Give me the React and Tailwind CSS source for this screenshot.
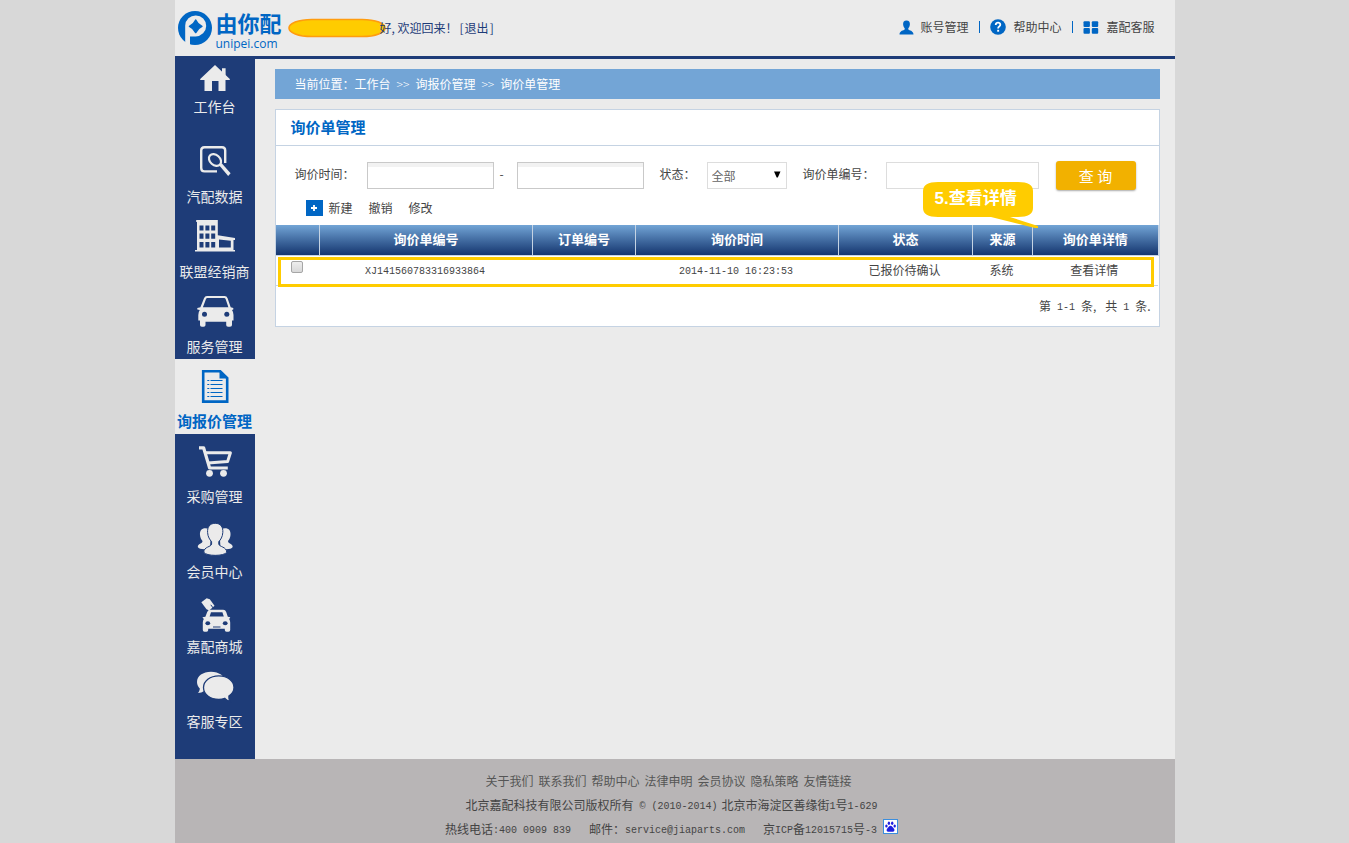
import React from "react";

const INK = "#ebebeb";
const NAVY = "#1e3c78";
const BLUE = "#0066c4";

const HomeIcon = () => (
  <svg viewBox="0 0 80 37" className="h-[37px] w-20" fill={INK} aria-hidden="true">
    <path d="M40 6 L54.8 20 V21 H50.5 V32 H43.5 V22 H37 V32 H29.5 V21 H25.2 V20Z" />
    <path d="M47 9.3 H50.6 V17 L47 13.5Z" />
  </svg>
);

const IconFrame = ({ children }) => (
  <svg viewBox="0 0 80 52" className="h-[52px] w-20" fill={INK} aria-hidden="true">
    {children}
  </svg>
);

const DataIcon = () => (
  <IconFrame>
    <path
      d="M50.2 29 V16.5 Q50.2 13.2 47 13.2 H29.5 Q26.2 13.2 26.2 16.5 V34 Q26.2 37.4 29.5 37.4 H42"
      fill="none"
      stroke={INK}
      strokeWidth="2.4"
    />
    <ellipse cx="40" cy="26" rx="6.8" ry="5" transform="rotate(42 40 26)" fill="none" stroke={INK} strokeWidth="2.2" />
    <path d="M44.3 31.5 L46.7 29.2 L55.6 39.3 L53.2 42Z" />
  </IconFrame>
);

const DealerIcon = () => (
  <IconFrame>
    <path
      fillRule="evenodd"
      d="M21.2 11 H42.8 V26.2 L60 29 V31 H58.5 V41 H60 V42.5 H20 V41 H22 V13 H21.2Z
         M24.5 16.5h4v5h-4z M30.4 16.5h4v5h-4z M36.2 16.5h4v5h-4z
         M24.5 24.5h4v5.2h-4z M30.4 24.5h4v5.2h-4z M36.2 24.5h4v5.2h-4z
         M24.5 32.9h4v5.6h-4z M30.4 32.9h4v5.6h-4z M36.2 32.9h4v5.6h-4z
         M44 30.4 L55.8 31.8 V38.6 H44Z"
    />
  </IconFrame>
);

const CarIcon = () => (
  <IconFrame>
    <path
      fillRule="evenodd"
      d="M32 12 H49.5 Q51.8 12 52.6 14.2 L55.7 23.3 L58.3 24 V25.5 L57 26 Q58.5 28 58.5 31 V36.5 H57 V41 Q57 42.8 55 42.8 H53 Q51.2 42.8 51.2 41 V37.8 H30.5 V41 Q30.5 42.8 28.7 42.8 H26.8 Q25 42.8 25 41 V36.5 H23.3 V31 Q23.3 28 24.8 26 L22.3 25.5 V24 L25.4 23.3 L29 14.2 Q29.8 12 32 12Z
         M32.4 14 Q31.4 14 31 15 L27.9 23.3 H53.4 L50.6 15 Q50.2 14 49.2 14Z"
    />
    <circle cx="29.5" cy="30.3" r="2.5" fill={NAVY} />
    <circle cx="51.8" cy="30.3" r="2.5" fill={NAVY} />
  </IconFrame>
);

const QuoteIcon = () => (
  <IconFrame>
    <path d="M28.2 12.2 H45.2 L52.2 19 V42.6 H28.2Z" fill="none" stroke={BLUE} strokeWidth="2.6" />
    <path d="M44.5 11.5 L53 19.6 H44.5Z" fill={BLUE} />
    <path d="M32.3 21.5h2m1.2 0h12M32.3 25.5h2m1.2 0h12M32.3 29.5h2m1.2 0h12M32.3 33.5h2m1.2 0h12M32.3 37.5h2m1.2 0h12" stroke={BLUE} strokeWidth="1.2" />
  </IconFrame>
);

const CartIcon = () => (
  <IconFrame>
    <path d="M24 13.8 H28.6 L34.6 34 H52.8" fill="none" stroke={INK} strokeWidth="3.2" strokeLinejoin="round" />
    <path d="M30 18.8 H55.4 L52.6 27.6 L33 29" fill="none" stroke={INK} strokeWidth="3" strokeLinejoin="round" />
    <circle cx="34.5" cy="39.3" r="3.4" />
    <circle cx="48.5" cy="39.3" r="3.4" />
  </IconFrame>
);

const MembersIcon = () => (
  <IconFrame>
    <path d="M30.5 19.3 C26.5 19.3 24.6 22 25 26 C25.2 29 26.6 31 27.5 32 C27.5 35 22.8 34.5 22.8 38 C24 40.5 30 40.8 35 39.5 L36 22 C35 20.3 33 19.3 30.5 19.3Z" />
    <path d="M50 19.3 C54 19.3 55.9 22 55.5 26 C55.3 29 53.9 31 53 32 C53 35 57.7 34.5 57.7 38 C56.5 40.5 50.5 40.8 45.5 39.5 L44.5 22 C45.5 20.3 47.5 19.3 50 19.3Z" />
    <path
      d="M40.2 14.3 C34.6 14.3 32.2 18.3 32.6 23.5 C32.8 27.8 34.8 30.8 36.6 32.6 V35 C36.4 38 28.8 37.6 28.8 43.2 C31 47.4 49.5 47.4 51.7 43.2 C51.7 37.6 44 38 43.8 35 V32.6 C45.6 30.8 47.6 27.8 47.8 23.5 C48.2 18.3 45.8 14.3 40.2 14.3Z"
      stroke={NAVY}
      strokeWidth="1"
    />
  </IconFrame>
);

const MallIcon = () => (
  <IconFrame>
    <path d="M26.3 18.3 L31.7 14.3 L34.8 15.3 L39.5 21.8 L34.2 26.6 L31.5 25.3Z" />
    <path d="M35.8 20.8 L39.3 25.5" stroke={NAVY} strokeWidth="1" />
    <path
      fillRule="evenodd"
      d="M35.3 25.8 H48.2 Q50.4 25.8 51.2 28 L52.8 32.8 L55.3 33.3 L54.2 35 Q55.2 36.5 55.2 38.5 V46 Q55.2 47.7 53.5 47.7 H51.5 Q49.8 47.7 49.8 46 V44.8 H33.2 V46 Q33.2 47.7 31.5 47.7 H29.5 Q27.8 47.7 27.8 46 V38.5 Q27.8 36.5 28.8 35 L27.4 33.3 L30.4 32.8 L32.2 28 Q33.1 25.8 35.3 25.8Z
         M36 28.3 L34.6 32.4 H48.8 L47.4 28.3Z"
    />
    <ellipse cx="32.8" cy="39.2" rx="2.4" ry="2" fill={NAVY} />
    <ellipse cx="50.2" cy="39.2" rx="2.4" ry="2" fill={NAVY} />
    <path d="M38 43 h7.5" stroke={NAVY} strokeWidth="1" />
  </IconFrame>
);

const ServiceIcon = () => (
  <IconFrame>
    <path d="M36 12.8 C28 12.8 22 17 22 23 C22 26 23.3 28 24.8 29.5 C24.8 31.3 24 33 22.8 34 C25.5 34 27.5 33.3 29 32 C31 33 33 33.5 36 33.5 C44 33.5 50 29 50 23 C50 17 44 12.8 36 12.8Z" />
    <path
      d="M43.8 16.8 C35 16.8 28.5 22 28.5 28.5 C28.5 35.3 35 40.3 43.8 40.3 C46 40.3 48 40 49.8 39.3 C51 40.8 53 42 55 42.3 C54 40.8 53.7 38.8 53.9 37 C57 35 59 32 59 28.5 C59 22 52.5 16.8 43.8 16.8Z"
      stroke={NAVY}
      strokeWidth="1.3"
    />
  </IconFrame>
);

const NAV = [
  { label: "工作台", Icon: HomeIcon },
  { label: "汽配数据", Icon: DataIcon },
  { label: "联盟经销商", Icon: DealerIcon },
  { label: "服务管理", Icon: CarIcon },
  { label: "询报价管理", Icon: QuoteIcon, active: true },
  { label: "采购管理", Icon: CartIcon },
  { label: "会员中心", Icon: MembersIcon },
  { label: "嘉配商城", Icon: MallIcon },
  { label: "客服专区", Icon: ServiceIcon },
];

const Logo = () => (
  <a href="#" className="flex items-start gap-1 text-[#0066c4]">
    <svg viewBox="0 0 34 34" className="mt-[11px] size-[34px]" aria-hidden="true">
      <circle cx="17" cy="17" r="17" fill={BLUE} />
      <path d="M7.2 34 V14.6 A10.5 10.5 0 1 1 17.7 25.4 H12 V34Z" fill={INK} />
      <path d="M17.7 9 Q19.6 13.4 24 15.3 Q19.6 17.2 17.7 21.6 Q15.8 17.2 11.4 15.3 Q15.8 13.4 17.7 9Z" fill={BLUE} stroke={BLUE} strokeWidth="1.4" strokeLinejoin="round" />
    </svg>
    <span className="flex flex-col pt-4">
      <span className="font-['Liberation_Sans','Noto_Sans_CJK_SC',sans-serif] text-[22px] leading-[18px] font-bold">由你配</span>
      <span className="pt-1 font-['Open_Sans',sans-serif] text-xs leading-3">unipei.com</span>
    </span>
  </a>
);

const Header = () => (
  <header className="flex h-[59px] items-center justify-between border-b-3 border-[#1e3c78] pr-5 pl-[3px]">
    <div className="flex h-14 items-start gap-1.5">
      <Logo />
      <p className="flex h-14 items-center text-xs text-[#1e3c78]">
        <svg viewBox="0 0 98 20" className="h-5 w-[98px]" aria-hidden="true">
          <path d="M24 1.5 H74 C88 1.5 97 5.5 97 10 C97 14.5 88 18.5 74 18.5 H24 C10 18.5 1 14.5 1 10 C1 5.5 10 1.5 24 1.5Z" fill="#ffcc00" stroke="#ff9c0f" strokeWidth="1.6" />
        </svg>
        <span className="-ml-1.5">好, 欢迎回来！</span>
        <a href="#" className="flex items-center gap-px pl-0.5">
          <span>[</span>退出<span>]</span>
        </a>
      </p>
    </div>
    <nav className="flex items-center text-xs text-[#444]">
      <a href="#" className="flex items-center gap-1.5 pr-[11px] pb-0.5">
        <svg viewBox="0 0 15 15" className="size-[15px]" fill={BLUE} aria-hidden="true">
          <path d="M7.5 0.5 C10 0.5 11 2 10.9 4.2 C10.8 6.5 9.7 7.6 9.3 8.3 V9.6 C10.3 10.6 14.3 10.6 14.5 14.5 H0.5 C0.7 10.6 4.7 10.6 5.7 9.6 V8.3 C5.3 7.6 4.2 6.5 4.1 4.2 C4 2 5 0.5 7.5 0.5Z" />
        </svg>
        账号管理
      </a>
      <a href="#" className="flex items-center gap-[7px] pr-[11px] pb-0.5">
        <span className="mr-[3px] h-3 w-px bg-[#0066c4]" />
        <svg viewBox="0 0 16 16" className="size-4" aria-hidden="true">
          <circle cx="8" cy="8" r="7.8" fill={BLUE} />
          <path d="M5.7 5.9 C5.7 2.8 10.4 2.9 10.3 5.8 C10.2 7.5 8.1 7.4 8.1 9.6" fill="none" stroke="#fff" strokeWidth="1.8" />
          <rect x="7.2" y="10.8" width="1.9" height="1.9" fill="#fff" />
        </svg>
        帮助中心
      </a>
      <a href="#" className="flex items-center gap-[7px] pb-0.5">
        <span className="mr-[3px] h-3 w-px bg-[#0066c4]" />
        <svg viewBox="0 0 16 13" className="h-[13px] w-4" fill={BLUE} aria-hidden="true">
          <rect x="0.5" y="0.3" width="6.4" height="5.8" rx="1" />
          <rect x="8.8" y="0.3" width="6.4" height="5.8" rx="1" />
          <rect x="0.5" y="7" width="6.4" height="5.8" rx="1" />
          <rect x="8.8" y="7" width="6.4" height="5.8" rx="1" />
        </svg>
        嘉配客服
      </a>
    </nav>
  </header>
);

const Sidebar = () => (
  <nav className="w-20 shrink-0 bg-[#1e3c78] pb-[25px]">
    {NAV.map(({ label, Icon, active }) => (
      <a
        key={label}
        href="#"
        className={
          active
            ? "flex h-[75px] flex-col items-center bg-[#ebebeb] text-[15px] leading-5 font-bold whitespace-nowrap text-[#0066c4]"
            : "flex h-[75px] flex-col items-center text-sm leading-5 whitespace-nowrap text-[#ebebeb]"
        }
      >
        <Icon />
        {label}
      </a>
    ))}
  </nav>
);

const DATE_INPUT =
  "h-[27px] w-[127px] border border-[#c9c9c9] bg-white px-1 shadow-[inset_0_4px_0_#f2f2f2] outline-none";

const Filters = () => (
  <form className="flex items-center pt-[15px] pl-[19px] text-xs" onSubmit={(e) => e.preventDefault()}>
    <label htmlFor="from" className="w-[72px] pb-1">询价时间：</label>
    <input id="from" type="text" className={DATE_INPUT} />
    <span className="w-[23px] pb-1 pl-1.5">-</span>
    <input type="text" aria-label="询价时间止" className={DATE_INPUT} />
    <label htmlFor="status" className="w-[63px] pb-1 pl-4">状态：</label>
    <div className="relative">
      <select id="status" className="h-[27px] w-20 appearance-none border border-[#ddd] bg-white pl-1 text-[#666] outline-none">
        <option>全部</option>
      </select>
      <svg viewBox="0 0 8 8" className="pointer-events-none absolute top-2 right-1.5 size-2" aria-hidden="true">
        <path d="M1 1.5 H7.5 L4.8 7.5 H3.7Z" fill="#000" />
      </svg>
    </div>
    <label htmlFor="number" className="w-[99px] pb-1 pl-4">询价单编号：</label>
    <input id="number" type="text" className="h-[27px] w-[153px] border border-[#ddd] bg-white px-1 outline-none" />
    <button type="submit" className="ml-[17px] h-[29px] w-20 rounded-[3px] bg-[#f2b100] text-[15px] text-white shadow-[0_1px_2px_#aaa]">
      查 询
    </button>
  </form>
);

const COLUMNS = [
  { title: "", width: "w-[44px]" },
  { title: "询价单编号", width: "w-[213px]" },
  { title: "订单编号", width: "w-[103px]" },
  { title: "询价时间", width: "w-[203px]" },
  { title: "状态", width: "w-[134px]" },
  { title: "来源", width: "w-[60px]" },
  { title: "询价单详情", width: "" },
];

const Mono = ({ children }) => (
  <span className="align-[1px] font-['Liberation_Mono','Noto_Sans_CJK_SC',monospace] text-[10px] leading-none">{children}</span>
);

const CELL = "p-0 pr-0.5";

const QuoteTable = () => (
  <div className="relative">
    <table className="w-full table-fixed border-collapse text-center text-xs">
      <thead>
        <tr className="h-[30px] bg-linear-to-b from-[#73a5d6] to-[#16366f] text-white">
          {COLUMNS.map((c, i) => (
            <th key={i} className={`${c.width} border-r border-[#c5d3e3] p-0 pb-0.5 text-[13px] font-bold`}>
              {c.title}
            </th>
          ))}
        </tr>
      </thead>
      <tbody>
        <tr className="h-[30px] border-y border-[#c5d3e3]">
          <td className="p-0 align-top">
            <input
              type="checkbox"
              aria-label="选择询价单"
              className="mt-[5px] ml-[15px] block size-3 appearance-none rounded-xs border border-[#a6a6a6] bg-linear-to-b from-[#eee] to-[#d8d8d8]"
            />
          </td>
          <td className={CELL}><Mono>XJ141560783316933864</Mono></td>
          <td className={CELL} />
          <td className={CELL}><Mono>2014-11-10 16:23:53</Mono></td>
          <td className={CELL}>已报价待确认</td>
          <td className={CELL}>系统</td>
          <td className={CELL}><a href="#">查看详情</a></td>
        </tr>
      </tbody>
    </table>
    <div className="pointer-events-none absolute top-8 right-[5px] left-0.5 h-[30px] border-3 border-[#ffcc00]" />
    <div className="pointer-events-none absolute -top-[43px] right-[121px] h-[46px] w-[115px]">
      <svg viewBox="0 0 115 46" className="absolute inset-0 h-[46px] w-[115px]" aria-hidden="true">
        <path d="M15 0 H95 Q110 0 110 9 V26 Q110 35 95 35 H87 L115 44 V46 H112 L68 35 H15 Q0 35 0 26 V9 Q0 0 15 0Z" fill="#ffcc00" />
      </svg>
      <span className="relative block pl-3 font-['Liberation_Sans','Noto_Sans_CJK_SC',sans-serif] text-[17px] leading-[34px] font-bold text-white">
        5.查看详情
      </span>
    </div>
  </div>
);

const Panel = () => (
  <section className="mt-2.5 border border-[#c5d3e3] bg-white text-[#444]">
    <h1 className="h-9 border-b border-[#c5d3e3] pl-[15px] text-[15px] leading-[33px] font-bold text-[#0066c4]">询价单管理</h1>
    <Filters />
    <div className="flex h-[35px] items-center gap-4 pl-[30px] text-xs">
      <button type="button" className="flex items-center gap-1.5">
        <svg viewBox="0 0 17 16" className="h-4 w-[17px]" aria-hidden="true">
          <rect width="17" height="16" fill={BLUE} />
          <path d="M5 8 H11 M8 5 V11" stroke="#fff" strokeWidth="1.8" />
        </svg>
        新建
      </button>
      <button type="button">撤销</button>
      <button type="button">修改</button>
    </div>
    <QuoteTable />
    <p className="h-10 pr-2 text-right text-xs leading-10">
      第<Mono> 1-1 </Mono>条,<Mono> </Mono>&nbsp;共<Mono> 1 </Mono>条.
    </p>
  </section>
);

const FOOTER_LINKS = ["关于我们", "联系我们", "帮助中心", "法律申明", "会员协议", "隐私策略", "友情链接"];

const Footer = () => (
  <footer className="bg-[#b8b5b6] pt-2.5 pr-1.5 pb-0.5 text-center text-xs leading-6 text-[#444]">
    <div className="flex justify-center gap-[5px] pr-1.5 text-[#555]">
      {FOOTER_LINKS.map((t) => (
        <a key={t} href="#">{t}</a>
      ))}
    </div>
    <p className="h-6">
      北京嘉配科技有限公司版权所有<Mono> © (2010-2014)</Mono>
      <span className="pl-1">北京市海淀区善缘街</span>
      <Mono>1</Mono>号<Mono>1-629</Mono>
    </p>
    <p className="flex h-6 items-baseline justify-center">
      <span>热线电话<Mono>:400 0909 839</Mono></span>
      <span className="pl-[18px]">邮件：<Mono>service@jiaparts.com</Mono></span>
      <span className="pl-[18px]">
        京<Mono>ICP</Mono>备<Mono>12015715</Mono>号<Mono>-3</Mono>
      </span>
      <svg viewBox="0 0 15 15" className="ml-1.5 size-[15px]" aria-hidden="true">
        <rect x="0.5" y="0.5" width="14" height="14" fill="#fff" stroke="#3b8ede" />
        <g fill="#1f1fe0">
          <ellipse cx="3.4" cy="7" rx="1.2" ry="1.6" />
          <ellipse cx="5.9" cy="4.2" rx="1.2" ry="1.7" />
          <ellipse cx="9.2" cy="4.2" rx="1.2" ry="1.7" />
          <ellipse cx="11.7" cy="7" rx="1.2" ry="1.6" />
          <path d="M7.5 6.8 C9 6.8 9.6 8.3 10.8 9.4 C12.3 11 11 13 9.2 12.7 H5.9 C4 13 2.8 11 4.3 9.4 C5.5 8.3 6 6.8 7.5 6.8Z" />
        </g>
      </svg>
    </p>
  </footer>
);

export default function App() {
  return (
    <div className="min-h-screen bg-[#d8d8d8] font-['Noto_Sans_CJK_SC',sans-serif]">
      <div className="mx-auto w-full max-w-[1000px] bg-[#ebebeb]">
        <Header />
        <div className="flex">
          <Sidebar />
          <main className="min-w-0 grow pt-2.5 pr-[15px] pl-5">
            <nav className="flex h-[30px] gap-1.5 bg-[#73a5d6] pl-5 text-xs leading-[30px] text-white">
              <span>当前位置：<a href="#">工作台</a></span>
              <span className="font-light">&gt;&gt;</span>
              <a href="#">询报价管理</a>
              <span className="font-light">&gt;&gt;</span>
              <a href="#">询价单管理</a>
            </nav>
            <Panel />
          </main>
        </div>
        <Footer />
      </div>
    </div>
  );
}
